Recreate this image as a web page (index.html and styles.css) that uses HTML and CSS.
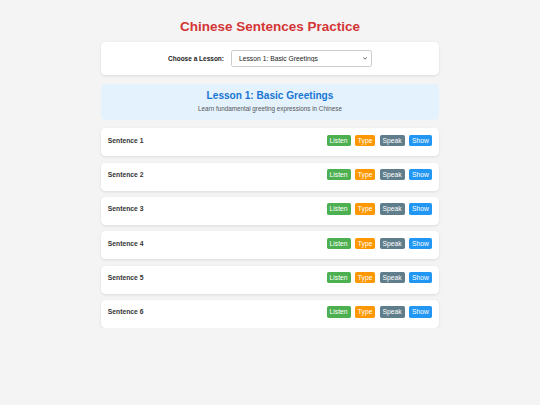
FILE: index.html
```html
<!DOCTYPE html>
<html lang="en">
<head>
<meta charset="utf-8">
<title>Chinese Sentences Practice</title>
<link rel="stylesheet" href="styles.css">
</head>
<body>
<div class="container">
  <h1 class="title">Chinese Sentences Practice</h1>
  <div class="panel">
    <label class="panel-label" for="lesson">Choose a Lesson:</label>
    <span class="select-wrap">
      <select id="lesson" class="lesson-select">
        <option>Lesson 1: Basic Greetings</option>
        <option>Lesson 2: Numbers</option>
      </select>
      <svg class="select-arrow" width="4" height="3" viewBox="0 0 8 6" aria-hidden="true"><path d="M1 1.2 L4 4.4 L7 1.2" fill="none" stroke="#444" stroke-width="1.6" stroke-linecap="round" stroke-linejoin="round"/></svg>
    </span>
  </div>
  <div class="lesson-header">
    <h2 class="lesson-title">Lesson 1: Basic Greetings</h2>
    <p class="lesson-desc">Learn fundamental greeting expressions in Chinese</p>
  </div>
  <div class="sentences">
    <div class="card"><span class="card-label">Sentence 1</span><div class="actions"><button class="btn listen">Listen</button><button class="btn type">Type</button><button class="btn speak">Speak</button><button class="btn show">Show</button></div></div>
    <div class="card"><span class="card-label">Sentence 2</span><div class="actions"><button class="btn listen">Listen</button><button class="btn type">Type</button><button class="btn speak">Speak</button><button class="btn show">Show</button></div></div>
    <div class="card"><span class="card-label">Sentence 3</span><div class="actions"><button class="btn listen">Listen</button><button class="btn type">Type</button><button class="btn speak">Speak</button><button class="btn show">Show</button></div></div>
    <div class="card"><span class="card-label">Sentence 4</span><div class="actions"><button class="btn listen">Listen</button><button class="btn type">Type</button><button class="btn speak">Speak</button><button class="btn show">Show</button></div></div>
    <div class="card"><span class="card-label">Sentence 5</span><div class="actions"><button class="btn listen">Listen</button><button class="btn type">Type</button><button class="btn speak">Speak</button><button class="btn show">Show</button></div></div>
    <div class="card"><span class="card-label">Sentence 6</span><div class="actions"><button class="btn listen">Listen</button><button class="btn type">Type</button><button class="btn speak">Speak</button><button class="btn show">Show</button></div></div>
  </div>
</div>
</body>
</html>
```
FILE: styles.css
```css
html, body {
  margin: 0;
  padding: 0;
  background: #f4f4f4;
  font-family: "Liberation Sans", Arial, sans-serif;
  color: #333;
}

.container {
  width: 338px;
  margin: 0 auto;
  padding-top: 18.5px;
}

.title {
  margin: 0 0 8px;
  font-size: 13.5px;
  line-height: 15.5px;
  font-weight: bold;
  color: #d33535;
  text-align: center;
}

.panel {
  height: 33px;
  background: #fff;
  border-radius: 4.5px;
  box-shadow: 0 1px 3px rgba(0, 0, 0, 0.1);
  display: flex;
  align-items: center;
  justify-content: center;
  gap: 7px;
}

.panel-label {
  font-size: 6.5px;
  font-weight: bold;
  color: #222;
}

.select-wrap {
  position: relative;
  display: flex;
}

.lesson-select {
  appearance: none;
  -webkit-appearance: none;
  width: 141px;
  height: 17.3px;
  box-sizing: border-box;
  padding: 0 0 0 7px;
  font-family: "Liberation Sans", Arial, sans-serif;
  font-size: 6.75px;
  color: #222;
  background: #fff;
  border: 1px solid #ccc;
  border-radius: 2.25px;
}

.select-arrow {
  position: absolute;
  right: 4.5px;
  top: 7.3px;
  pointer-events: none;
}

.lesson-header {
  margin-top: 9px;
  height: 35.5px;
  box-sizing: border-box;
  padding-top: 5.7px;
  background: #e3f2fd;
  border-radius: 4.5px;
  text-align: center;
}

.lesson-title {
  margin: 0 0 3.6px;
  font-size: 10.1px;
  line-height: 11.6px;
  font-weight: bold;
  color: #1976d2;
}

.lesson-desc {
  margin: 0;
  font-size: 6.3px;
  line-height: 7.25px;
  color: #555;
}

.sentences {
  margin-top: 8.8px;
  display: flex;
  flex-direction: column;
  gap: 6.34px;
}

.card {
  height: 28px;
  box-sizing: border-box;
  padding: 6.3px 7.3px 10.3px 6.75px;
  background: #fff;
  border-radius: 4.5px;
  box-shadow: 0 1px 3px rgba(0, 0, 0, 0.1);
  display: flex;
  align-items: center;
  justify-content: space-between;
}

.card-label {
  font-size: 6.75px;
  font-weight: bold;
  color: #333;
}

.actions {
  display: flex;
  gap: 4.4px;
}

.btn {
  height: 11.4px;
  padding: 0 2.9px;
  border: none;
  border-radius: 1.7px;
  font-family: "Liberation Sans", Arial, sans-serif;
  font-size: 6.75px;
  line-height: 11.4px;
  color: #fff;
  cursor: pointer;
}

.listen { background: #4caf50; }
.type { background: #ff9800; }
.speak { background: #607d8b; }
.show { background: #2196f3; }
```
